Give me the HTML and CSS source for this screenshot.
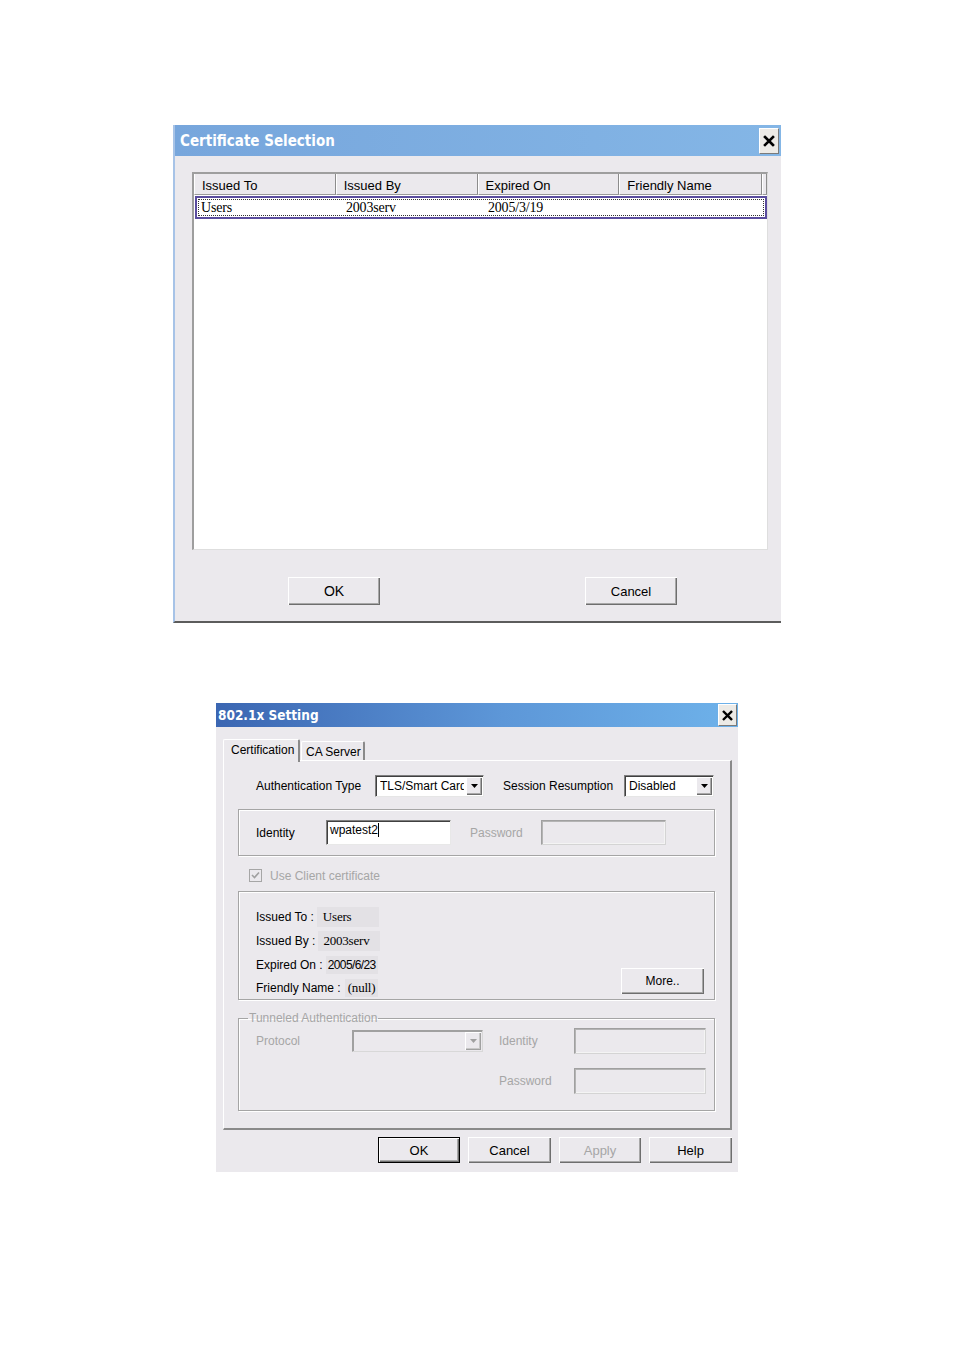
FILE: index.html
```html
<!DOCTYPE html>
<html>
<head>
<meta charset="utf-8">
<link rel="stylesheet" href="styles.css">
</head>
<body>
<div class="page">

  <div class="dlg1">
    <div class="title1">
      <span class="ttext1">Certificate Selection</span>
      <div class="close close1">
        <svg width="12" height="12" viewBox="0 0 12 12"><path d="M2 2 L10 10 M10 2 L2 10" stroke="#000" stroke-width="2.6" stroke-linecap="square"/></svg>
      </div>
    </div>
    <div class="body1">
      <div class="list">
        <div class="lhead">
          <div class="hc">Issued To</div>
          <div class="hc">Issued By</div>
          <div class="hc">Expired On</div>
          <div class="hc last">Friendly Name</div>
          <div class="hc end"></div>
        </div>
        <div class="lrow">
          <div class="focus">
            <span class="rc first serif">Users</span>
            <span class="rc serif">2003serv</span>
            <span class="rc serif">2005/3/19</span>
          </div>
        </div>
      </div>
      <div class="btns1">
        <div class="btn b1 ok1">OK</div>
        <div class="btn b1 cancel1">Cancel</div>
      </div>
    </div>
  </div>

  <div class="dlg2">
    <div class="title2">
      <span class="ttext2">802.1x Setting</span>
      <div class="close close2">
        <svg width="11" height="11" viewBox="0 0 12 12"><path d="M2 2 L10 10 M10 2 L2 10" stroke="#000" stroke-width="2.6" stroke-linecap="square"/></svg>
      </div>
    </div>
    <div class="body2">
      <div class="tabs">
        <div class="tab active">Certification</div>
        <div class="tab second">CA Server</div>
      </div>
      <div class="panel">
        <div class="authrow">
          <span class="lbl w119">Authentication Type</span>
          <div class="combo w109"><span class="ctext">TLS/Smart Card</span><span class="arrow"><svg width="7" height="4" viewBox="0 0 7 4"><path d="M0 0 H7 L3.5 4 Z" fill="#000"/></svg></span></div>
          <span class="lbl w121 ml19">Session Resumption</span>
          <div class="combo w90"><span class="ctext">Disabled</span><span class="arrow"><svg width="7" height="4" viewBox="0 0 7 4"><path d="M0 0 H7 L3.5 4 Z" fill="#000"/></svg></span></div>
        </div>

        <div class="group idgroup">
          <span class="lbl w70">Identity</span>
          <div class="edit w125">wpatest2<span class="caret"></span></div>
          <span class="lbl dis w71 ml19">Password</span>
          <div class="edit disabled w125"></div>
        </div>

        <div class="chkrow">
          <span class="chk"><svg width="9" height="9" viewBox="0 0 9 9"><path d="M1 4 L3.5 6.5 L8 1.5" stroke="#a0a0a0" stroke-width="1.6" fill="none"/></svg></span>
          <span class="lbl dis">Use Client certificate</span>
        </div>

        <div class="group certgroup">
          <div class="certrows">
            <div class="crow"><span class="clbl">Issued To :</span><span class="cval serif v1">Users</span></div>
            <div class="crow"><span class="clbl">Issued By :</span><span class="cval serif v2">2003serv</span></div>
            <div class="crow"><span class="clbl">Expired On :</span><span class="cval narrow v3">2005/6/23</span></div>
            <div class="crow"><span class="clbl">Friendly Name :</span><span class="cval serif v4">(null)</span></div>
          </div>
          <div class="btn more">More..</div>
        </div>

        <fieldset class="tunnel">
          <legend>Tunneled Authentication</legend>
          <div class="trow">
            <span class="lbl dis w96">Protocol</span>
            <div class="combo disabled w131"><span class="ctext"></span><span class="arrow dis"><svg width="7" height="4" viewBox="0 0 7 4"><path d="M0 0 H7 L3.5 4 Z" fill="#a0a0a0"/></svg></span></div>
            <span class="lbl dis w75 ml16">Identity</span>
            <div class="edit disabled w132 h26"></div>
          </div>
          <div class="trow second">
            <span class="lbl dis w75">Password</span>
            <div class="edit disabled w132 h26"></div>
          </div>
        </fieldset>
      </div>
      <div class="btns2">
        <div class="btn b2 def">OK</div>
        <div class="btn b2 w83">Cancel</div>
        <div class="btn b2 disabledtxt">Apply</div>
        <div class="btn b2 w83">Help</div>
      </div>
    </div>
  </div>

</div>
</body>
</html>
```

FILE: styles.css
```css
* { box-sizing: border-box; }
html, body { margin: 0; padding: 0; background: #fff; }
body { font-family: "Liberation Sans", Arial, sans-serif; color: #000; }
.page { display: flex; flex-direction: column; align-items: flex-start; }

.serif { font-family: "Liberation Serif", "Times New Roman", serif; letter-spacing: -0.2px; }
.narrow { letter-spacing: -0.6px; }

/* ---------- dialog 1 ---------- */
.dlg1 {
  margin: 125px 0 0 173px;
  width: 608px;
  height: 498px;
  background: #ebe9ed;
  border-left: 2px solid #a7c3e7;
  border-bottom: 2px solid #5c5c5c;
  display: flex;
  flex-direction: column;
}
.title1 {
  height: 31px;
  flex: none;
  background: linear-gradient(to right, #77a6dc, #84b6e6);
  display: flex;
  align-items: center;
  justify-content: space-between;
  padding: 1px 2px 0 5px;
}
.ttext1 { color: #fff; font-weight: bold; font-size: 15px; font-family: "DejaVu Sans Condensed", "DejaVu Sans", sans-serif; }
.close {
  display: flex; align-items: center; justify-content: center;
  background: #eceae6;
  border-top: 1px solid #fff; border-left: 1px solid #fff;
  border-right: 1px solid #7a7a7a; border-bottom: 1px solid #7a7a7a;
}
.close1 { width: 20px; height: 26px; }
.body1 { padding: 16px 0 0 17px; display: flex; flex-direction: column; }
.list {
  width: 576px; height: 378px;
  background: #fff;
  border-top: 2px solid #9e9e9e; border-left: 2px solid #9e9e9e;
  border-right: 1px solid #dedede; border-bottom: 1px solid #dedede;
  display: flex; flex-direction: column;
}
.lhead { display: flex; height: 21px; flex: none; }
.hc {
  width: 142px; height: 21px;
  background: #ebe9ed;
  border-left: 1px solid #fff;
  border-right: 1px solid #8c8c8c;
  border-bottom: 1px solid #9a9a9a;
  font-size: 13px;
  padding: 4px 0 0 7px;
  line-height: 15px;
}
.hc.last { width: 143px; }
.hc.end { width: 5px; padding: 0; }
.lrow {
  margin: 1px 0 0 1px;
  height: 23px;
  border: 2px solid #5a4c9e;
  padding: 1px;
}
.focus {
  height: 100%;
  border: 1px dotted #333;
  display: flex; align-items: center;
  font-size: 14px;
}
.rc { width: 142px; padding-left: 5px; flex: none; }
.rc.first { padding-left: 2px; }
.btns1 { display: flex; margin-top: 27px; }
.btn {
  display: flex; align-items: center; justify-content: center;
  background: #ebe9ed;
  box-shadow: inset 1px 1px #fff, inset -1px -1px #6e6e6e, inset -2px -2px #a8a8a8;
  font-size: 13px;
}
.b1 { width: 92px; height: 28px; font-size: 13px; }
.ok1 { margin-left: 96px; font-size: 14px; }
.cancel1 { margin-left: 205px; }

/* ---------- dialog 2 ---------- */
.dlg2 {
  margin: 80px 0 0 216px;
  width: 522px;
  height: 469px;
  background: #ebe9ed;
  display: flex; flex-direction: column;
}
.title2 {
  height: 24px; flex: none;
  background: linear-gradient(to right, #3b66b2, #5d97d8 55%, #6eb2ea);
  display: flex; align-items: center; justify-content: space-between;
  padding: 0 1px 0 2px;
}
.ttext2 { color: #fff; font-weight: bold; font-size: 13.5px; font-family: "DejaVu Sans Condensed", "DejaVu Sans", sans-serif; }
.close2 { width: 19px; height: 22px; }
.body2 { padding: 12px 6px 9px 7px; display: flex; flex-direction: column; font-size: 12px; }
.tabs { display: flex; height: 21px; align-items: flex-end; position: relative; z-index: 1; }
.tab {
  height: 19px;
  display: flex; align-items: center;
  border-top: 1px solid #fff; border-left: 1px solid #fff;
  border-right: 2px solid #8a8a8a;
  border-radius: 2px 2px 0 0;
  background: #ebe9ed;
  font-size: 12px;
  white-space: nowrap;
  flex: none;
}
.tab.active { height: 23px; margin-bottom: -2px; width: 77px; padding: 0 0 3px 7px; }
.tab.second { width: 64px; margin-left: 1px; padding: 1px 0 0 4px; }
.panel {
  width: 509px; height: 370px;
  border-top: 1px solid #fff; border-left: 1px solid #fff;
  border-right: 2px solid #8a8a8a; border-bottom: 2px solid #8a8a8a;
  display: flex; flex-direction: column;
}
.lbl { font-size: 12px; white-space: nowrap; flex: none; }
.lbl.dis { color: #a6a6a6; }
.w119 { width: 119px; } .w121 { width: 121px; } .w70 { width: 70px; } .w71 { width: 71px; }
.w75 { width: 75px; } .w96 { width: 96px; }
.ml19 { margin-left: 19px; } .ml16 { margin-left: 16px; }
.authrow { display: flex; align-items: center; margin: 14px 0 0 32px; height: 22px; }

.combo {
  height: 22px; flex: none;
  background: #fff;
  border-top: 1px solid #7f7f7f; border-left: 1px solid #7f7f7f;
  border-right: 1px solid #e6e6e6; border-bottom: 1px solid #e6e6e6;
  box-shadow: inset 1px 1px #404040;
  display: flex; align-items: center;
  padding: 1px 1px 1px 4px;
}
.combo.disabled { background: #ebe9ed; box-shadow: inset 1px 1px #a0a0a0; border-color: #a0a0a0 #d8d8d8 #d8d8d8 #a0a0a0; }
.ctext { flex: 1; overflow: hidden; white-space: nowrap; font-size: 12px; margin-right: 2px; }
.arrow {
  width: 16px; height: 18px; flex: none;
  background: #ebe9ed;
  box-shadow: inset 1px 1px #fff, inset -1px -1px #6e6e6e, inset -2px -2px #a8a8a8;
  display: flex; align-items: center; justify-content: center;
}
.arrow.dis { box-shadow: inset 1px 1px #fff, inset -1px -1px #a0a0a0, inset -2px -2px #c8c8c8; }
.w109 { width: 109px; } .w90 { width: 90px; } .w131 { width: 131px; }

.group {
  margin-left: 14px;
  width: 477px;
  border: 1px solid #a5a5a5;
  box-shadow: inset 1px 1px #fff, 1px 1px #fff;
}
.idgroup { margin-top: 12px; height: 47px; display: flex; align-items: center; padding-left: 17px; }
.edit {
  height: 25px; flex: none;
  background: #fff;
  border-top: 1px solid #7f7f7f; border-left: 1px solid #7f7f7f;
  border-right: 1px solid #e8e8e8; border-bottom: 1px solid #e8e8e8;
  box-shadow: inset 1px 1px #404040;
  font-size: 12px;
  padding: 2px 0 0 3px;
  display: flex; align-items: flex-start;
}
.edit.disabled {
  background: #ebe9ed;
  border-color: #a0a0a0 #d4d4d4 #d4d4d4 #a0a0a0;
  box-shadow: inset 1px 1px #b4b4b4, inset -1px -1px #f4f4f4;
}
.w125 { width: 125px; } .w132 { width: 132px; } .h26 { height: 26px; }
.caret { display: inline-block; width: 1px; height: 14px; background: #000; }

.chkrow { display: flex; align-items: center; margin: 13px 0 0 25px; height: 13px; }
.chk {
  width: 13px; height: 13px; flex: none;
  border: 1px solid #a6a6a6;
  background: #ebe9ed;
  display: flex; align-items: center; justify-content: center;
  margin-right: 8px;
}

.certgroup { margin-top: 9px; height: 109px; display: flex; justify-content: space-between; padding: 13px 10px 0 17px; }
.certrows { display: flex; flex-direction: column; flex: none; }
.crow { height: 24px; flex: none; display: flex; align-items: center; white-space: nowrap; }
.crow:last-child { height: 22px; }
.clbl { font-size: 12px; }
.cval { font-size: 13px; background: #e3e1e5; padding: 2px 2px; }
.v1 { margin-left: 3px; width: 62px; padding-left: 6px; }
.v2 { margin-left: 3px; width: 62px; padding-left: 5px; }
.v3 { margin-left: 3px; font-size: 12px; }
.v4 { margin-left: 4px; padding: 1px 3px; }
.more { width: 83px; height: 26px; align-self: flex-end; font-size: 12px; margin-bottom: 5px; }

.tunnel {
  margin: 11px 0 0 14px;
  width: 477px; height: 100px;
  padding: 0 0 0 17px;
  border: 1px solid #a5a5a5;
  box-shadow: inset 1px 1px #fff, 1px 1px #fff;
  min-width: 0;
}
.tunnel legend { color: #a6a6a6; font-size: 12px; padding: 0 1px; margin-left: -8px; line-height: 14px; }
.trow { display: flex; align-items: center; height: 26px; margin-top: 3px; }
.trow.second { margin-top: 14px; padding-left: 243px; }

.btns2 { display: flex; justify-content: flex-end; gap: 8px; margin-top: 7px; }
.b2 { width: 82px; height: 26px; font-size: 13px; }
.b2.w83 { width: 83px; }
.def { box-shadow: inset 0 0 0 1px #000, inset 2px 2px #fff, inset -2px -2px #6e6e6e, inset -3px -3px #a8a8a8; }
.disabledtxt { color: #a6a6a6; }
```
